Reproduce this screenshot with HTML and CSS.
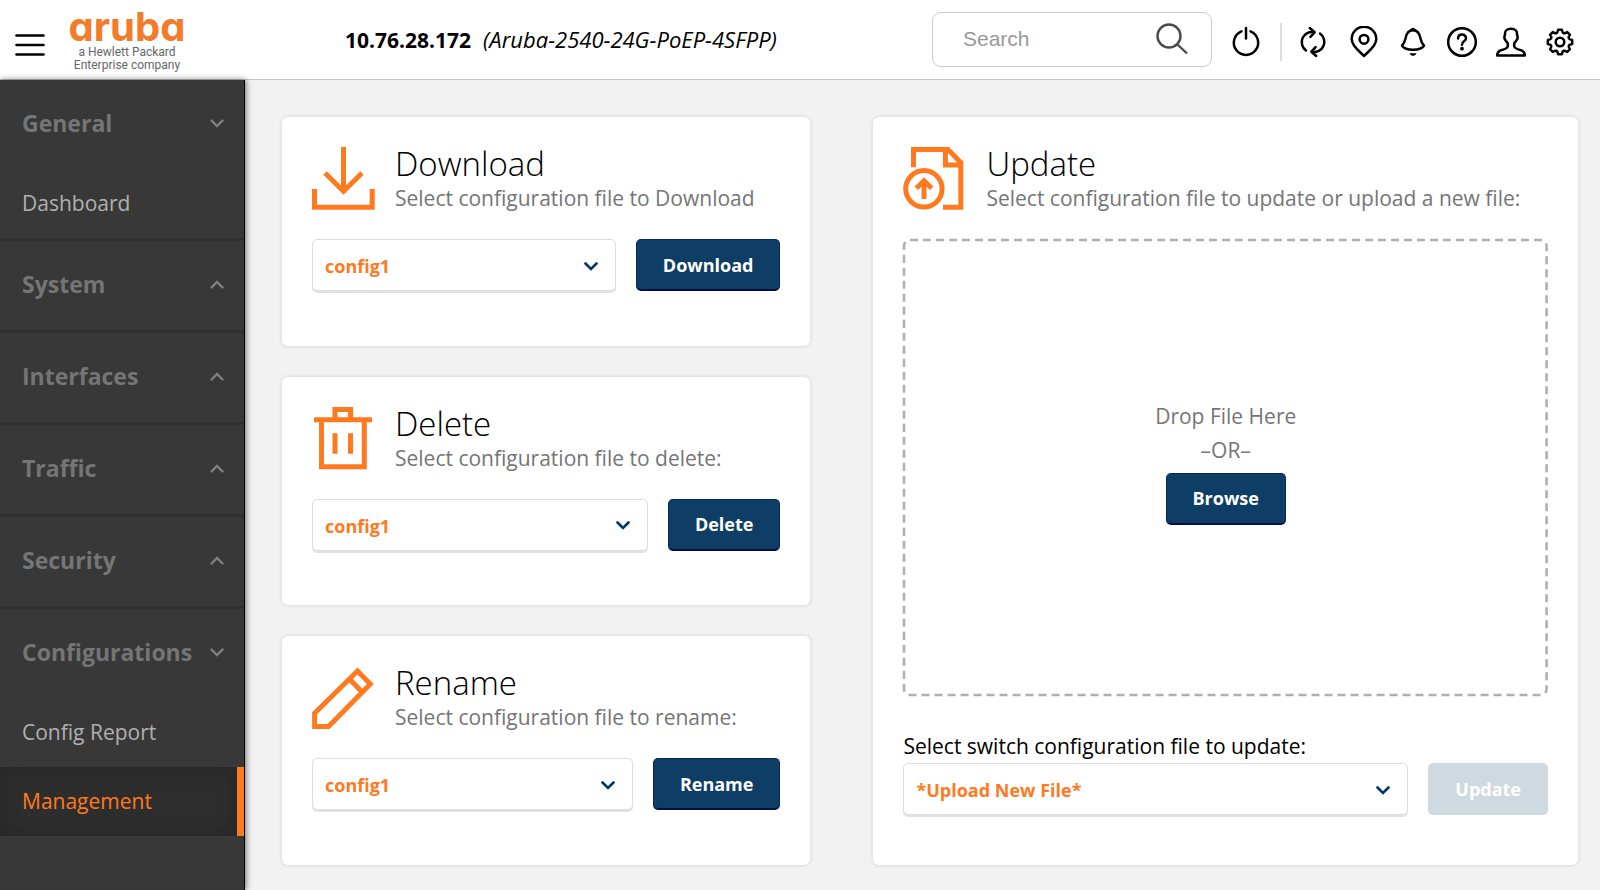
FILE: index.html
```html
<!DOCTYPE html>
<html lang="en">
<head>
<meta charset="utf-8">
<title>Configuration Management</title>
<link rel="stylesheet" href="styles.css">
</head>
<body>
<div class="app">
  <header class="topbar">
    <button class="icon-btn menu-btn" type="button" aria-label="Menu">
      <svg width="30" height="24" viewBox="0 0 30 24" fill="none" stroke="#000" stroke-width="2.6" stroke-linecap="round"><path d="M1.500 2.500h27M1.500 12h27M1.500 21.500h27"/></svg>
    </button>
    <a class="logo" href="#">
      <span class="logo-name">aruba</span>
      <span class="logo-tag">a Hewlett Packard<br>Enterprise company</span>
    </a>
    <p class="device"><strong>10.76.28.172</strong><em>(Aruba-2540-24G-PoEP-4SFPP)</em></p>
    <div class="search">
      <input class="search-input" type="text" placeholder="Search" aria-label="Search">
      <svg width="32" height="32" viewBox="0 0 32 32" fill="none" stroke="#4a4a4a" stroke-width="2.4"><circle cx="13" cy="13" r="11.500"/><path d="M21.500 21.500L31 30.500"/></svg>
    </div>
    <button class="icon-btn" type="button" aria-label="Power">
      <svg class="glyph" viewBox="-16 -16 32 32"><path d="M-4.500-10.600A12.200 12.200 0 1 0 4.500-10.600M0-14V-3.500"/></svg>
    </button>
    <div class="tools">
      <button class="icon-btn icon-btn-wide" type="button" aria-label="Refresh">
        <svg class="glyph" viewBox="-16 -16 32 32"><path d="M-7 8.500A10.200 10.200 0 0 1 1-9.800M-3.200-14L1.600-9.700L-2.600-5.200M7-8.500A10.200 10.200 0 0 1-1 9.800M3.200 14L-1.600 9.700L2.600 5.200"/></svg>
      </button>
      <button class="icon-btn" type="button" aria-label="Location">
        <svg class="glyph" viewBox="-16 -16 32 32"><path d="M0 14C-3.500 10-12.300 4.500-12.300-3A12.300 12.300 0 0 1 12.300-3C12.300 4.500 3.500 10 0 14Z"/><circle cx="0" cy="-2.700" r="4.400"/></svg>
      </button>
      <button class="icon-btn" type="button" aria-label="Notifications">
        <svg class="glyph" viewBox="-16 -16 32 32"><path d="M0-11.800C-5.500-11.800-6.800-7.500-7.500-3.500C-8.200 0-9.500 2-11 3.700C-9.500 6.500-5 7.800 0 7.800S9.500 6.500 11 3.700C9.500 2 8.200 0 7.500-3.500C6.800-7.500 5.500-11.800 0-11.800Z"/><path class="solid" d="M-3-12Q-2-14.300 0-14.300T3-12ZM-3.500 11.200H3.500Q2.500 14 0 14T-3.500 11.200Z"/></svg>
      </button>
      <button class="icon-btn" type="button" aria-label="Help">
        <svg class="glyph" viewBox="-16 -16 32 32"><circle cx="0" cy="0" r="13.800"/><path d="M-3.900-3.500C-3.900-8.800 4-8.600 4-3.800C4-.800 0-.900 0 2.700"/><circle class="solid" cx="0" cy="6.700" r="1.900"/></svg>
      </button>
      <button class="icon-btn" type="button" aria-label="Account">
        <svg class="glyph" viewBox="-16 -16 32 32"><path d="M0-13.200C4-13.200 6.200-11.500 6-8C5.900-6.500 7-5.500 6.500-3.700C6-2 5.200-1.800 4.700-.500C4-.200 3 1.500 3.200 4C3.400 7.200 8 7.200 11 8.700C13.300 9.900 13.800 11.500 13.800 13.500H-13.800C-13.800 11.500-13.300 9.900-11 8.700C-8 7.200-3.400 7.200-3.200 4C-3 1.500-4-.200-4.700-.500C-5.200-1.800-6-2-6.500-3.700C-7-5.500-5.900-6.500-6-8C-6.200-11.500-4-13.200 0-13.200Z"/></svg>
      </button>
      <button class="icon-btn" type="button" aria-label="Settings">
        <svg class="glyph" viewBox="-16 -16 32 32"><path d="M12.150-1.920V1.920Q6.500 2.690 9.950 7.230L7.230 9.950Q2.690 6.500 1.920 12.150H-1.920Q-2.690 6.500-7.230 9.950L-9.950 7.230Q-6.500 2.690-12.150 1.920V-1.920Q-6.500-2.690-9.950-7.230L-7.230-9.950Q-2.690-6.500-1.920-12.150H1.920Q2.690-6.500 7.230-9.950L9.950-7.230Q6.500-2.690 12.150-1.920Z"/><circle cx="0" cy="0" r="4.300"/></svg>
      </button>
    </div>
  </header>

  <nav class="sidebar" aria-label="Main">
    <section class="group">
      <button class="group-head" type="button" aria-expanded="true">General<svg class="chev" viewBox="0 0 14 9"><path d="M1.500 1.500L7 7L12.500 1.500"/></svg></button>
      <a class="item" href="#">Dashboard</a>
    </section>
    <section class="group">
      <button class="group-head" type="button" aria-expanded="false">System<svg class="chev" viewBox="0 0 14 9"><path d="M1.500 7.500L7 2L12.500 7.500"/></svg></button>
    </section>
    <section class="group">
      <button class="group-head" type="button" aria-expanded="false">Interfaces<svg class="chev" viewBox="0 0 14 9"><path d="M1.500 7.500L7 2L12.500 7.500"/></svg></button>
    </section>
    <section class="group">
      <button class="group-head" type="button" aria-expanded="false">Traffic<svg class="chev" viewBox="0 0 14 9"><path d="M1.500 7.500L7 2L12.500 7.500"/></svg></button>
    </section>
    <section class="group">
      <button class="group-head" type="button" aria-expanded="false">Security<svg class="chev" viewBox="0 0 14 9"><path d="M1.500 7.500L7 2L12.500 7.500"/></svg></button>
    </section>
    <section class="group">
      <button class="group-head" type="button" aria-expanded="true">Configurations<svg class="chev" viewBox="0 0 14 9"><path d="M1.500 1.500L7 7L12.500 1.500"/></svg></button>
      <a class="item" href="#">Config Report</a>
      <a class="item item-active" href="#" aria-current="page">Management</a>
    </section>
  </nav>

  <main class="content">
    <div class="stack">
      <section class="card">
        <div class="card-head">
          <svg class="card-icon" viewBox="0 0 64 64"><path d="M31.500 0V44M13 26L31.500 44.200L50 26M2.500 42V60.200H60.200V42"/></svg>
          <div>
            <h2 class="card-title">Download</h2>
            <label class="card-sub" for="dl">Select configuration file to Download</label>
          </div>
        </div>
        <div class="controls">
          <div class="select">
            <select id="dl"><option>config1</option></select>
            <svg class="select-chev" viewBox="0 0 14 9"><path d="M1.500 1.500L7 7L12.500 1.500"/></svg>
          </div>
          <button class="btn" type="button">Download</button>
        </div>
      </section>

      <section class="card">
        <div class="card-head">
          <svg class="card-icon" viewBox="0 0 64 64"><path d="M2 12.700H60M23 12V2.500H38.600V12M9.500 13V59.800H52.300V13M23 26.300V46.700M38.500 26.300V46.700"/></svg>
          <div>
            <h2 class="card-title">Delete</h2>
            <label class="card-sub" for="del">Select configuration file to delete:</label>
          </div>
        </div>
        <div class="controls">
          <div class="select">
            <select id="del"><option>config1</option></select>
            <svg class="select-chev" viewBox="0 0 14 9"><path d="M1.500 1.500L7 7L12.500 1.500"/></svg>
          </div>
          <button class="btn" type="button">Delete</button>
        </div>
      </section>

      <section class="card">
        <div class="card-head">
          <svg class="card-icon" viewBox="0 0 64 64"><path d="M45.500 5L58.300 18L16.500 60.600H2.600V47.200ZM37.300 12.700L50 26"/></svg>
          <div>
            <h2 class="card-title">Rename</h2>
            <label class="card-sub" for="ren">Select configuration file to rename:</label>
          </div>
        </div>
        <div class="controls">
          <div class="select">
            <select id="ren"><option>config1</option></select>
            <svg class="select-chev" viewBox="0 0 14 9"><path d="M1.500 1.500L7 7L12.500 1.500"/></svg>
          </div>
          <button class="btn" type="button">Rename</button>
        </div>
      </section>
    </div>

    <section class="card card-update">
      <div class="card-head">
        <svg class="card-icon" viewBox="0 0 64 64"><path d="M10.500 20.300V2.500H45L57.800 15.500V60.200H40M42.400 2.500V18H57.800"/><circle cx="20.900" cy="41.800" r="18.200"/><path d="M21 34V52M13.300 41.300L21 33.800L28.700 41.300"/></svg>
        <div>
          <h2 class="card-title">Update</h2>
          <p class="card-sub">Select configuration file to update or upload a new file:</p>
        </div>
      </div>
      <div class="dropzone">
        <svg class="dropzone-outline" aria-hidden="true"><rect width="100%" height="100%" rx="6"/></svg>
        <p class="drop-text">Drop File Here<br>–OR–</p>
        <button class="btn" type="button">Browse</button>
      </div>
      <label class="field-label" for="upd">Select switch configuration file to update:</label>
      <div class="controls">
        <div class="select">
          <select id="upd"><option>*Upload New File*</option></select>
          <svg class="select-chev" viewBox="0 0 14 9"><path d="M1.500 1.500L7 7L12.500 1.500"/></svg>
        </div>
        <button class="btn" type="button" disabled>Update</button>
      </div>
    </section>
  </main>
</div>
</body>
</html>
```
FILE: styles.css
```css
:root {
  --orange: #ff7a1f;
  --navy: #0e3d66;
  --muted: #757575;
}

* {
  box-sizing: border-box;
}

body {
  margin: 0;
  font-family: "Open Sans", "Noto Sans", sans-serif;
  font-size: 21px;
  color: #000;
  background: #f2f2f2;
}

p,
h2 {
  margin: 0;
}

button,
input,
select {
  font: inherit;
}

a {
  color: inherit;
  text-decoration: none;
}

.app {
  display: grid;
  grid-template-columns: 245px 1fr;
  grid-template-rows: auto 1fr;
  min-height: 100vh;
}

/* Top bar */

.topbar {
  grid-column: 1 / -1;
  display: flex;
  align-items: center;
  height: 80px;
  padding: 0 25px 0 15px;
  background: #fff;
  border-bottom: 1px solid #c6c6c6;
}

.icon-btn {
  display: flex;
  flex: none;
  justify-content: center;
  width: 30px;
  padding: 0;
  border: 0;
  background: none;
  cursor: pointer;
}

.icon-btn-wide {
  width: 34px;
}

.topbar > .icon-btn,
.tools {
  margin-top: 5px;
}

.topbar > .menu-btn {
  margin-top: 10px;
}

.glyph {
  flex: none;
  width: 32px;
  height: 32px;
  fill: none;
  stroke: #000;
  stroke-width: 2.5;
  stroke-linecap: round;
  stroke-linejoin: round;
}

.glyph .solid {
  fill: #000;
  stroke: none;
}

.logo {
  display: flex;
  flex-direction: column;
  align-items: center;
  width: 118px;
  margin-left: 23px;
}

.logo-name {
  font: 700 40px/38px Inter, sans-serif;
  font-feature-settings: "cv11" 1;
  color: #f37b29;
}

.logo-tag {
  font: 12px/13px Roboto, sans-serif;
  color: #666;
  text-align: center;
}

.device {
  flex: 1;
  margin-left: 159px;
  padding-bottom: 2px;
  white-space: nowrap;
}

.device em {
  margin-left: 12px;
  font-size: 22px;
}

.search {
  display: flex;
  align-items: center;
  width: 280px;
  height: 55px;
  margin-right: 19px;
  padding: 0 23px 2px 30px;
  background: #fff;
  border: 1px solid #ccc;
  border-radius: 9px;
}

.search-input {
  flex: 1;
  min-width: 0;
  padding: 0;
  border: 0;
  outline: 0;
  background: none;
  font-family: "Liberation Sans", Arial, sans-serif;
}

.search-input::placeholder {
  color: #999;
}

.tools {
  display: flex;
  align-items: center;
  gap: 19px;
  height: 38px;
  margin-left: 19px;
  padding-left: 14px;
  border-left: 2px solid #ddd;
}

/* Sidebar */

.sidebar {
  background: #383838;
  border-right: 1px solid #000;
  box-shadow: 1px 0 6px rgba(0, 0, 0, 0.55);
}

.group {
  border-bottom: 3px solid #303030;
}

.group:last-child {
  border-bottom: 0;
}

.group-head {
  display: flex;
  align-items: center;
  justify-content: space-between;
  width: 100%;
  height: 89px;
  padding: 0 20px 3px 22px;
  border: 0;
  background: none;
  color: #757575;
  font-size: 23px;
  font-weight: 700;
  cursor: pointer;
}

.chev,
.select-chev {
  width: 14px;
  height: 9px;
  fill: none;
  stroke: #808080;
  stroke-width: 2.4;
  stroke-linecap: round;
}

.item {
  display: flex;
  align-items: center;
  height: 69px;
  padding: 0 22px 2px;
  color: #b0b0b0;
}

.item-active {
  color: var(--orange);
  background: #2d2d2d;
  border-right: 7px solid var(--orange);
  box-shadow: inset 0 0 16px #262626;
}

/* Cards */

.content {
  display: grid;
  grid-template-columns: 3fr 4fr;
  gap: 63px;
  padding: 37px 22px 25px 37px;
}

.stack {
  display: grid;
  grid-auto-rows: 1fr;
  gap: 31px;
}

.card {
  padding: 30px;
  background: #fff;
  border-radius: 6px;
  box-shadow: 0 0 4px rgba(0, 0, 0, 0.14);
}

.card-update {
  display: flex;
  flex-direction: column;
  padding-bottom: 50px;
}

.card-head {
  display: flex;
  gap: 19px;
  margin-bottom: 24px;
}

.card-icon {
  flex: none;
  width: 64px;
  height: 64px;
  fill: none;
  stroke: var(--orange);
  stroke-width: 5;
}

.card-title {
  font-size: 33px;
  font-weight: 300;
  line-height: 34px;
}

.card-sub {
  display: block;
  line-height: 34px;
  color: var(--muted);
}

.controls {
  display: flex;
  gap: 20px;
}

.select {
  display: grid;
  flex: 1;
  align-items: center;
}

.select select,
.select-chev {
  grid-area: 1 / 1;
}

.select select {
  width: 100%;
  height: 52px;
  padding: 2px 48px 0 12px;
  appearance: none;
  background: #fff;
  border: 1px solid #ddd;
  border-radius: 5px;
  box-shadow: 0 2px 0 #e2e2e2;
  color: var(--orange);
  font-size: 18px;
  font-weight: 700;
}

.select-chev {
  justify-self: end;
  margin: 2px 18px 0 0;
  stroke: #00366b;
  stroke-width: 2.6;
  pointer-events: none;
}

.btn {
  height: 52px;
  padding: 0 26px;
  border: 1px solid #06295a;
  border-bottom: 2px solid #000f45;
  border-radius: 5px;
  background: var(--navy);
  color: #fff;
  font-size: 18px;
  font-weight: 700;
  cursor: pointer;
}

.btn:disabled {
  border-color: #cfd9e1;
  background: #cfd9e1;
  cursor: default;
}

.dropzone {
  position: relative;
  display: flex;
  flex: 1;
  flex-direction: column;
  align-items: center;
  justify-content: center;
  gap: 6px;
  padding-bottom: 12px;
}

.dropzone-outline {
  position: absolute;
  inset: 1px;
  width: calc(100% - 2px);
  height: calc(100% - 2px);
  overflow: visible;
  fill: none;
  stroke: #b0b0b0;
  stroke-width: 2.6;
  stroke-dasharray: 8 5;
  pointer-events: none;
}

.drop-text {
  line-height: 34px;
  text-align: center;
  color: var(--muted);
}

.field-label {
  margin-top: 33px;
  line-height: 34px;
}
```
